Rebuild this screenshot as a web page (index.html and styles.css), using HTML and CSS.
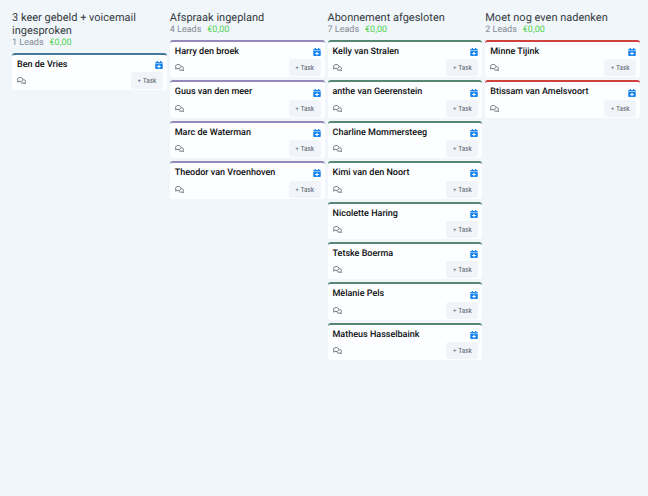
FILE: index.html
```
<!DOCTYPE html>
<html lang="nl">
<head>
<meta charset="utf-8">
<meta name="viewport" content="width=device-width, initial-scale=1">
<title>Leads</title>
<link rel="stylesheet" href="styles.css">
</head>
<body>
<svg class="sprite" aria-hidden="true">
  <symbol id="calendar" viewBox="0 0 15 16">
    <path fill="currentColor" fill-rule="evenodd" d="M3 0h2.500v2h4V0H12v2h1.500A1.500 1.500 0 0 1 15 3.500V5H0V3.500A1.500 1.500 0 0 1 1.500 2H3zM0 6h15v8.500a1.500 1.500 0 0 1-1.500 1.500h-12A1.500 1.500 0 0 1 0 14.500zM6.500 7.500v2.500H4v2h2.500v2.500h2V12H11v-2H8.500V7.500z"/>
  </symbol>
  <symbol id="comments" viewBox="0 0 18 14">
    <path fill="none" stroke="currentColor" stroke-width="1.800" stroke-linejoin="round" d="M6.500 1C9.600 1 12 2.800 12 5S9.600 9 6.500 9c-.8 0-1.500-.1-2.200-.3C3.400 9.400 2.200 9.900 1 10c.6-.7 1-1.400 1.200-2.200C1.400 7 1 6 1 5c0-2.200 2.400-4 5.500-4z"/>
    <path fill="none" stroke="currentColor" stroke-width="1.800" stroke-linejoin="round" d="M13 5.100c2.400.4 4 1.900 4 3.800 0 1-.4 1.900-1.200 2.600.2.700.6 1.200 1.200 1.500-1.200 0-2.300-.3-3.200-.9-.6.2-1.200.3-1.900.3-2 0-3.700-.9-4.600-2.300"/>
  </symbol>
</svg>
<main class="board">
  <section class="column column--blue">
    <header class="column-header">
      <h2>3 keer gebeld + voicemail ingesproken</h2>
      <p><span>1 Leads</span><span class="amount">€0,00</span></p>
    </header>
    <article class="card">
      <div class="row"><h3>Ben de Vries</h3><button class="icon-button" aria-label="Afspraak plannen"><svg class="calendar"><use href="#calendar"/></svg></button></div>
      <div class="row"><button class="icon-button" aria-label="Reacties"><svg class="comments"><use href="#comments"/></svg></button><button class="task">+ Task</button></div>
    </article>
  </section>
  <section class="column column--purple">
    <header class="column-header">
      <h2>Afspraak ingepland</h2>
      <p><span>4 Leads</span><span class="amount">€0,00</span></p>
    </header>
    <article class="card">
      <div class="row"><h3>Harry den broek</h3><button class="icon-button" aria-label="Afspraak plannen"><svg class="calendar"><use href="#calendar"/></svg></button></div>
      <div class="row"><button class="icon-button" aria-label="Reacties"><svg class="comments"><use href="#comments"/></svg></button><button class="task">+ Task</button></div>
    </article>
    <article class="card">
      <div class="row"><h3>Guus van den meer</h3><button class="icon-button" aria-label="Afspraak plannen"><svg class="calendar"><use href="#calendar"/></svg></button></div>
      <div class="row"><button class="icon-button" aria-label="Reacties"><svg class="comments"><use href="#comments"/></svg></button><button class="task">+ Task</button></div>
    </article>
    <article class="card">
      <div class="row"><h3>Marc de Waterman</h3><button class="icon-button" aria-label="Afspraak plannen"><svg class="calendar"><use href="#calendar"/></svg></button></div>
      <div class="row"><button class="icon-button" aria-label="Reacties"><svg class="comments"><use href="#comments"/></svg></button><button class="task">+ Task</button></div>
    </article>
    <article class="card">
      <div class="row"><h3>Theodor van Vroenhoven</h3><button class="icon-button" aria-label="Afspraak plannen"><svg class="calendar"><use href="#calendar"/></svg></button></div>
      <div class="row"><button class="icon-button" aria-label="Reacties"><svg class="comments"><use href="#comments"/></svg></button><button class="task">+ Task</button></div>
    </article>
  </section>
  <section class="column column--green">
    <header class="column-header">
      <h2>Abonnement afgesloten</h2>
      <p><span>7 Leads</span><span class="amount">€0,00</span></p>
    </header>
    <article class="card">
      <div class="row"><h3>Kelly van Stralen</h3><button class="icon-button" aria-label="Afspraak plannen"><svg class="calendar"><use href="#calendar"/></svg></button></div>
      <div class="row"><button class="icon-button" aria-label="Reacties"><svg class="comments"><use href="#comments"/></svg></button><button class="task">+ Task</button></div>
    </article>
    <article class="card">
      <div class="row"><h3>anthe van Geerenstein</h3><button class="icon-button" aria-label="Afspraak plannen"><svg class="calendar"><use href="#calendar"/></svg></button></div>
      <div class="row"><button class="icon-button" aria-label="Reacties"><svg class="comments"><use href="#comments"/></svg></button><button class="task">+ Task</button></div>
    </article>
    <article class="card">
      <div class="row"><h3>Charline Mommersteeg</h3><button class="icon-button" aria-label="Afspraak plannen"><svg class="calendar"><use href="#calendar"/></svg></button></div>
      <div class="row"><button class="icon-button" aria-label="Reacties"><svg class="comments"><use href="#comments"/></svg></button><button class="task">+ Task</button></div>
    </article>
    <article class="card">
      <div class="row"><h3>Kimi van den Noort</h3><button class="icon-button" aria-label="Afspraak plannen"><svg class="calendar"><use href="#calendar"/></svg></button></div>
      <div class="row"><button class="icon-button" aria-label="Reacties"><svg class="comments"><use href="#comments"/></svg></button><button class="task">+ Task</button></div>
    </article>
    <article class="card">
      <div class="row"><h3>Nicolette Haring</h3><button class="icon-button" aria-label="Afspraak plannen"><svg class="calendar"><use href="#calendar"/></svg></button></div>
      <div class="row"><button class="icon-button" aria-label="Reacties"><svg class="comments"><use href="#comments"/></svg></button><button class="task">+ Task</button></div>
    </article>
    <article class="card">
      <div class="row"><h3>Tetske Boerma</h3><button class="icon-button" aria-label="Afspraak plannen"><svg class="calendar"><use href="#calendar"/></svg></button></div>
      <div class="row"><button class="icon-button" aria-label="Reacties"><svg class="comments"><use href="#comments"/></svg></button><button class="task">+ Task</button></div>
    </article>
    <article class="card">
      <div class="row"><h3>Mèlanie Pels</h3><button class="icon-button" aria-label="Afspraak plannen"><svg class="calendar"><use href="#calendar"/></svg></button></div>
      <div class="row"><button class="icon-button" aria-label="Reacties"><svg class="comments"><use href="#comments"/></svg></button><button class="task">+ Task</button></div>
    </article>
    <article class="card">
      <div class="row"><h3>Matheus Hasselbaink</h3><button class="icon-button" aria-label="Afspraak plannen"><svg class="calendar"><use href="#calendar"/></svg></button></div>
      <div class="row"><button class="icon-button" aria-label="Reacties"><svg class="comments"><use href="#comments"/></svg></button><button class="task">+ Task</button></div>
    </article>
  </section>
  <section class="column column--red">
    <header class="column-header">
      <h2>Moet nog even nadenken</h2>
      <p><span>2 Leads</span><span class="amount">€0,00</span></p>
    </header>
    <article class="card">
      <div class="row"><h3>Minne Tijink</h3><button class="icon-button" aria-label="Afspraak plannen"><svg class="calendar"><use href="#calendar"/></svg></button></div>
      <div class="row"><button class="icon-button" aria-label="Reacties"><svg class="comments"><use href="#comments"/></svg></button><button class="task">+ Task</button></div>
    </article>
    <article class="card">
      <div class="row"><h3>Btissam van Amelsvoort</h3><button class="icon-button" aria-label="Afspraak plannen"><svg class="calendar"><use href="#calendar"/></svg></button></div>
      <div class="row"><button class="icon-button" aria-label="Reacties"><svg class="comments"><use href="#comments"/></svg></button><button class="task">+ Task</button></div>
    </article>
  </section>
</main>
</body>
</html>
```
FILE: styles.css
```
* {
  box-sizing: border-box;
}

body {
  margin: 0;
  background: #f0f6fa;
  color: #0c0e10;
  font-family: Roboto, "Liberation Sans", sans-serif;
  text-rendering: geometricPrecision;
}

h2,
h3,
p {
  margin: 0;
}

button {
  border: 0;
  font: inherit;
  cursor: pointer;
}

.sprite {
  position: absolute;
  width: 0;
  height: 0;
}

.board {
  display: grid;
  grid-template-columns: repeat(4, minmax(0, 1fr));
  align-items: start;
  gap: 3px;
  padding: 11px 8px 11px 12px;
}

.column {
  display: flex;
  flex-direction: column;
  gap: 3px;
}

.column--blue { --accent: #44789b; }
.column--purple { --accent: #9489b9; }
.column--green { --accent: #568772; }
.column--red { --accent: #d0403d; }

.column-header h2 {
  color: #363b42;
  font-size: 11px;
  font-weight: 400;
  line-height: 13px;
}

.column-header p {
  display: flex;
  gap: 6px;
  color: #858c94;
  font-size: 9px;
  line-height: 13px;
}

.column-header .amount {
  color: #4fd04f;
}

.card {
  padding: 3px 4px 1px 5px;
  border-top: 2px solid var(--accent);
  border-radius: 3px;
  background: #fdfeff;
}

.row {
  display: flex;
  align-items: center;
  justify-content: space-between;
}

.card h3 {
  font-size: 9px;
  font-weight: 500;
  line-height: 1.6;
}

.icon-button {
  display: flex;
  padding: 0;
  background: none;
}

.calendar {
  width: 8px;
  height: 8px;
  color: #1683ef;
}

.comments {
  width: 9px;
  height: 7px;
  color: #5c636b;
}

.task {
  width: 32px;
  height: 17px;
  padding: 0;
  border-radius: 3px;
  background: #f1f5fa;
  color: #5d656f;
  font-family: Inter, "Liberation Sans", sans-serif;
  font-size: 6px;
  font-weight: 500;
  line-height: 17px;
  text-align: center;
}
```
